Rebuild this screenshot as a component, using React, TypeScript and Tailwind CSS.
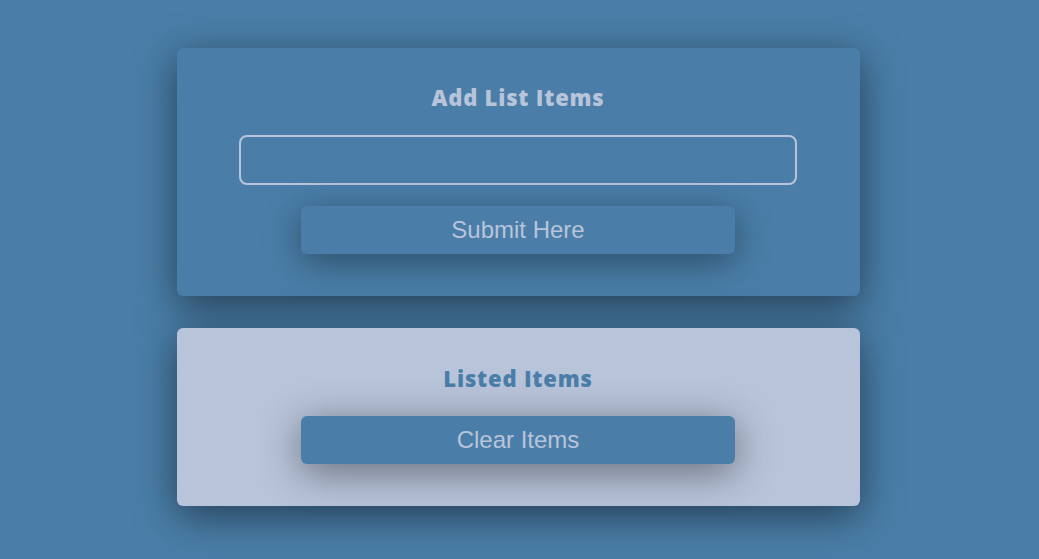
import React from 'react';

const App: React.FC = () => {
  return (
    <div className="min-h-screen w-full bg-[#4a7ea8] pt-[48px] pr-[2px] pb-10 font-['Liberation_Sans',Arial,sans-serif]">
      {/* Add card */}
      <div className="mx-auto flex w-[683px] flex-col items-center rounded-[6px] bg-[#4a7ea8] pt-[28px] pr-[1px] pb-[42px] shadow-[0_10px_40px_rgba(0,0,0,0.5)]">
        <h1 className="h-[42px] font-['Open_Sans',sans-serif] text-[22px] leading-[42px] font-extrabold tracking-[0.8px] text-[#b8c4da]">
          Add List Items
        </h1>
        <input
          type="text"
          className="mt-[17px] h-[50px] w-[558px] rounded-[8px] border-2 border-[#b8c4da] bg-transparent px-3 text-[20px] text-[#b8c4da] outline-none"
        />
        <button className="mt-[21px] h-[48px] w-[434px] rounded-[6px] bg-[#4a7ea8] text-[24px] text-[#b8c4da] shadow-[0_8px_36px_rgba(0,0,0,0.4)]">
          Submit Here
        </button>
      </div>

      {/* List card */}
      <div className="mx-auto mt-[32px] flex w-[683px] flex-col items-center rounded-[6px] bg-[#b8c4da] pt-[29px] pr-[1px] pb-[42px] shadow-[0_10px_40px_rgba(0,0,0,0.5)]">
        <h2 className="h-[42px] font-['Open_Sans',sans-serif] text-[22px] leading-[42px] font-extrabold tracking-[0.8px] text-[#4a7ea8]">
          Listed Items
        </h2>
        <button className="mt-[17px] h-[48px] w-[434px] rounded-[6px] bg-[#4a7ea8] text-[24px] text-[#b8c4da] shadow-[0_8px_40px_rgba(0,0,0,0.45)]">
          Clear Items
        </button>
      </div>
    </div>
  );
};

export default App;
